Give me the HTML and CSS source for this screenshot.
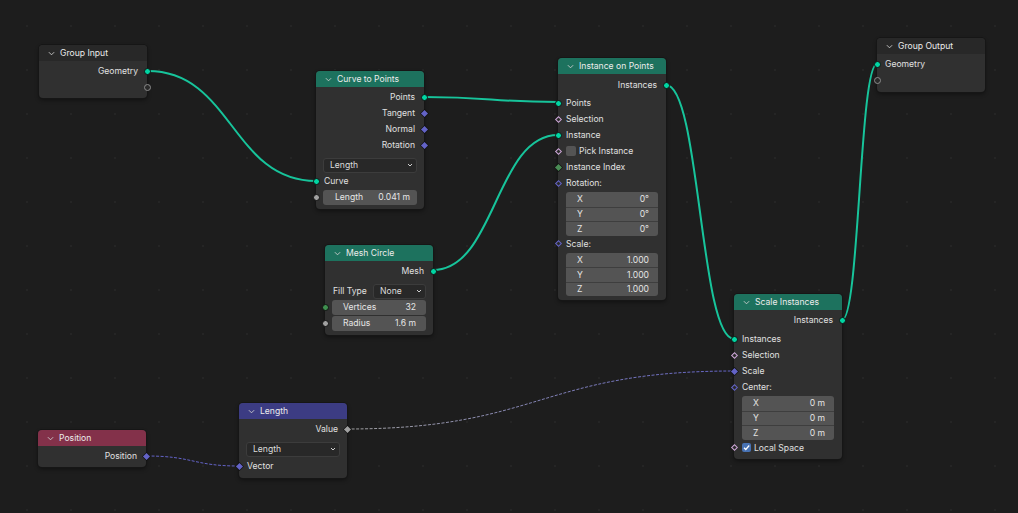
FILE: index.html
```html
<!DOCTYPE html>
<html>
<head>
<meta charset="utf-8">
<link rel="stylesheet" href="styles.css">
</head>
<body>
<div class="canvas">
  <svg class="links" width="1018" height="513" viewBox="0 0 1018 513">
    <defs>
      <linearGradient id="gval" gradientUnits="userSpaceOnUse" x1="347" y1="0" x2="734" y2="0">
        <stop offset="0" stop-color="#a1a1a1"/>
        <stop offset="1" stop-color="#6363c7"/>
      </linearGradient>
    </defs>
    <g class="geo-links">
      <path d="M148,71 C232,71 232,181 316,181"/>
      <path d="M424,97 C491,97 491,102 558,102"/>
      <path d="M433,270 C495.5,270 495.5,135 558,135"/>
      <path d="M666,85 C700,85 700,339 734,339"/>
      <path d="M842,320 C859.5,320 859.5,64 877,64"/>
    </g>
    <path class="field-link vec-link" d="M147,456 C193,456 193,466 239,466"/>
    <path class="field-link val-link" d="M347,429 C540.5,429 540.5,371 734,371"/>
  </svg>

  <!-- Group Input -->
  <div class="node n-group-input">
    <div class="head head-group"><svg class="chev" viewBox="0 0 8 5"><path d="M1 1l3 3 3-3"/></svg><span>Group Input</span></div>
    <div class="body pb3">
      <div class="row out"><span>Geometry</span><i class="sock s-geo"></i></div>
      <div class="row out"><i class="sock s-empty"></i></div>
    </div>
  </div>

  <!-- Curve to Points -->
  <div class="node n-curve">
    <div class="head head-geo"><svg class="chev" viewBox="0 0 8 5"><path d="M1 1l3 3 3-3"/></svg><span>Curve to Points</span></div>
    <div class="body pb4">
      <div class="row out"><span>Points</span><i class="sock s-geo"></i></div>
      <div class="row out"><span>Tangent</span><i class="sock d-vec"></i></div>
      <div class="row out"><span>Normal</span><i class="sock d-vec"></i></div>
      <div class="row out"><span>Rotation</span><i class="sock d-vec"></i></div>
      <div class="row prop gap4"><div class="dropdown full"><span>Length</span><svg class="dchev" viewBox="0 0 6 4"><path d="M1 1l2 2 2-2"/></svg></div></div>
      <div class="row in"><i class="sock s-geo"></i><span>Curve</span></div>
      <div class="row prop in"><i class="sock s-float"></i><div class="numfield tight"><span>Length</span><span>0.041 m</span></div></div>
    </div>
  </div>

  <!-- Mesh Circle -->
  <div class="node n-mesh">
    <div class="head head-geo"><svg class="chev" viewBox="0 0 8 5"><path d="M1 1l3 3 3-3"/></svg><span>Mesh Circle</span></div>
    <div class="body pb4">
      <div class="row out"><span>Mesh</span><i class="sock s-geo"></i></div>
      <div class="row prop gap4 split"><span class="plabel">Fill Type</span><div class="dropdown short"><span>None</span><svg class="dchev" viewBox="0 0 6 4"><path d="M1 1l2 2 2-2"/></svg></div></div>
      <div class="row prop in"><i class="sock s-int"></i><div class="numfield"><span>Vertices</span><span>32</span></div></div>
      <div class="row prop in"><i class="sock s-float"></i><div class="numfield"><span>Radius</span><span>1.6 m</span></div></div>
    </div>
  </div>

  <!-- Instance on Points -->
  <div class="node n-inst">
    <div class="head head-geo"><svg class="chev" viewBox="0 0 8 5"><path d="M1 1l3 3 3-3"/></svg><span>Instance on Points</span></div>
    <div class="body pt3 pb3h">
      <div class="row out"><span>Instances</span><i class="sock s-geo"></i></div>
      <div class="row in gap2"><i class="sock s-geo"></i><span>Points</span></div>
      <div class="row in"><i class="sock h-bool"></i><span>Selection</span></div>
      <div class="row in"><i class="sock s-geo"></i><span>Instance</span></div>
      <div class="row in"><i class="sock h-bool"></i><span class="cb"></span><span>Pick Instance</span></div>
      <div class="row in"><i class="sock d-int"></i><span>Instance Index</span></div>
      <div class="row in"><i class="sock h-vec"></i><span>Rotation:</span></div>
      <div class="vec">
        <div class="vrow"><span>X</span><span>0°</span></div>
        <div class="vrow"><span>Y</span><span>0°</span></div>
        <div class="vrow"><span>Z</span><span>0°</span></div>
      </div>
      <div class="row in"><i class="sock h-vec"></i><span>Scale:</span></div>
      <div class="vec">
        <div class="vrow"><span>X</span><span>1.000</span></div>
        <div class="vrow"><span>Y</span><span>1.000</span></div>
        <div class="vrow"><span>Z</span><span>1.000</span></div>
      </div>
    </div>
  </div>

  <!-- Group Output -->
  <div class="node n-group-output">
    <div class="head head-group"><svg class="chev" viewBox="0 0 8 5"><path d="M1 1l3 3 3-3"/></svg><span>Group Output</span></div>
    <div class="body pb4">
      <div class="row in"><i class="sock s-geo"></i><span>Geometry</span></div>
      <div class="row in"><i class="sock s-empty"></i></div>
    </div>
  </div>

  <!-- Scale Instances -->
  <div class="node n-scale">
    <div class="head head-geo"><svg class="chev" viewBox="0 0 8 5"><path d="M1 1l3 3 3-3"/></svg><span>Scale Instances</span></div>
    <div class="body pb3">
      <div class="row out"><span>Instances</span><i class="sock s-geo"></i></div>
      <div class="row in gap3"><i class="sock s-geo"></i><span>Instances</span></div>
      <div class="row in"><i class="sock h-bool"></i><span>Selection</span></div>
      <div class="row in"><i class="sock d-vec"></i><span>Scale</span></div>
      <div class="row in"><i class="sock h-vec"></i><span>Center:</span></div>
      <div class="vec">
        <div class="vrow"><span>X</span><span>0 m</span></div>
        <div class="vrow"><span>Y</span><span>0 m</span></div>
        <div class="vrow"><span>Z</span><span>0 m</span></div>
      </div>
      <div class="row in"><i class="sock h-bool"></i><span class="cb on"><svg viewBox="0 0 10 10"><path d="M2.2 5.2l2 2 3.8-4.4"/></svg></span><span>Local Space</span></div>
    </div>
  </div>

  <!-- Length -->
  <div class="node n-length">
    <div class="head head-vec"><svg class="chev" viewBox="0 0 8 5"><path d="M1 1l3 3 3-3"/></svg><span>Length</span></div>
    <div class="body pb4">
      <div class="row out"><span>Value</span><i class="sock d-float"></i></div>
      <div class="row prop gap4"><div class="dropdown full"><span>Length</span><svg class="dchev" viewBox="0 0 6 4"><path d="M1 1l2 2 2-2"/></svg></div></div>
      <div class="row in gap1"><i class="sock d-vec"></i><span>Vector</span></div>
    </div>
  </div>

  <!-- Position -->
  <div class="node n-position">
    <div class="head head-input"><svg class="chev" viewBox="0 0 8 5"><path d="M1 1l3 3 3-3"/></svg><span>Position</span></div>
    <div class="body pb3">
      <div class="row out"><span>Position</span><i class="sock d-vec"></i></div>
    </div>
  </div>
</div>
</body>
</html>
```

FILE: styles.css
```css
* { box-sizing: border-box; }
html, body {
  margin: 0;
  padding: 0;
  background: #1d1d1d;
}
.canvas {
  position: relative;
  width: 1018px;
  height: 513px;
  overflow: hidden;
  background-color: #1d1d1d;
  background-image: radial-gradient(circle, #252525 0.8px, transparent 1.1px);
  background-size: 44px 44px;
  background-position: 5px 4px;
  font-family: Inter, "DejaVu Sans", sans-serif;
  font-size: 8.6px;
  color: #e0e0e0;
}
.links {
  position: absolute;
  left: 0;
  top: 0;
}
.geo-links path {
  fill: none;
  stroke: #17c49b;
  stroke-width: 2;
}
.field-link {
  fill: none;
  stroke-width: 1;
  stroke-dasharray: 3 1.5;
}
.vec-link { stroke: #6363c7; }
.val-link { stroke: url(#gval); }

/* nodes */
.node {
  position: absolute;
  width: 108px;
  background: #303030;
  border-radius: 4px;
  box-shadow: 0 0 0 1px #161616, 0 2px 4px rgba(0, 0, 0, 0.45);
}
.n-group-input { left: 39px; top: 45px; }
.n-curve { left: 316px; top: 71px; }
.n-mesh { left: 325px; top: 245px; }
.n-inst { left: 558px; top: 58px; }
.n-group-output { left: 877px; top: 38px; }
.n-scale { left: 734px; top: 294px; }
.n-length { left: 239px; top: 403px; }
.n-position { left: 38px; top: 430px; }

.head {
  height: 16px;
  display: flex;
  align-items: center;
  gap: 5px;
  padding-left: 9px;
  border-radius: 4px 4px 0 0;
  color: #ececec;
  white-space: nowrap;
}
.head-group { background: #282828; }
.head-geo { background: #1d725e; }
.head-vec { background: #3c3c83; }
.head-input { background: #83314a; }
.chev {
  width: 7px;
  height: 5px;
  fill: none;
  stroke: #d0d0d0;
  stroke-width: 1;
  flex: none;
}

.body { padding-top: 2px; }
.pt3 { padding-top: 3px; }
.pb3 { padding-bottom: 3px; }
.pb3h { padding-bottom: 3.5px; }
.pb4 { padding-bottom: 4px; }

.row {
  position: relative;
  height: 16px;
  display: flex;
  align-items: center;
  padding: 0 9px 0 8px;
  white-space: nowrap;
}
.row.out { justify-content: flex-end; }
.gap1 { margin-top: 1px; }
.gap2 { margin-top: 2px; }
.gap3 { margin-top: 3px; }
.gap4 { margin-top: 4px; }
.row.prop { padding: 0 7px; }
.row.split { justify-content: space-between; }
.plabel { padding-left: 1px; }

/* sockets */
.sock {
  position: absolute;
  top: 50%;
  width: 7px;
  height: 7px;
  margin-top: -3.5px;
}
.out .sock { right: -3.5px; }
.in .sock { left: -3.5px; }
.s-geo, .s-float, .s-int, .s-empty {
  border-radius: 50%;
  border: 1px solid #111;
}
.s-geo { background: #00d6a3; }
.s-float { background: #a1a1a1; }
.s-int { background: #3f8f4f; }
.s-empty { background: #2a2a2a; border: 1px solid #8c8c8c; }
.d-vec, .d-float, .d-int, .h-bool, .h-vec {
  width: 5px;
  height: 5px;
  margin-top: -2.5px;
  transform: rotate(45deg);
}
.out .d-vec, .out .d-float { right: -2.5px; }
.in .d-vec, .in .d-int, .in .h-bool, .in .h-vec { left: -2.5px; }
.d-vec { background: #6363c7; box-shadow: 0 0 0 0.6px #111; }
.d-float { background: #a1a1a1; box-shadow: 0 0 0 0.6px #111; }
.d-int { background: #4a8c55; box-shadow: 0 0 0 0.6px #111; }
.h-bool { background: #2a2a2a; border: 1.2px solid #cca6d6; }
.h-vec { background: #2a2a2a; border: 1.2px solid #6363c7; }

/* widgets */
.dropdown {
  height: 15px;
  display: flex;
  align-items: center;
  justify-content: space-between;
  padding: 0 3px 0 6px;
  background: #282828;
  border: 1px solid #3c3c3c;
  border-radius: 3px;
  color: #dcdcdc;
}
.dropdown.full { width: 100%; }
.dropdown.short { width: 53px; }
.dchev {
  width: 6px;
  height: 4px;
  fill: none;
  stroke: #cfcfcf;
  stroke-width: 1;
}
.numfield {
  width: 100%;
  height: 15px;
  display: flex;
  align-items: center;
  justify-content: space-between;
  padding: 0 10px 0 11px;
  background: #545454;
  border-radius: 3px;
  color: #e6e6e6;
}
.numfield.tight { padding: 0 7px 0 12px; }
.vec {
  margin: 1px 8px 0;
  background: #545454;
  border-radius: 3px;
  overflow: hidden;
}
.vrow {
  height: 14.5px;
  display: flex;
  align-items: center;
  justify-content: space-between;
  padding: 0 9px 0 11px;
  color: #e4e4e4;
}
.vrow + .vrow { border-top: 1px solid #3e3e3e; }
.cb {
  width: 10px;
  height: 10px;
  margin-right: 3px;
  border-radius: 2px;
  background: #545454;
  flex: none;
}
.cb.on {
  width: 9px;
  height: 9px;
  background: #4772b3;
  display: flex;
}
.cb.on svg {
  width: 9px;
  height: 9px;
  fill: none;
  stroke: #ffffff;
  stroke-width: 1.4;
}
```
